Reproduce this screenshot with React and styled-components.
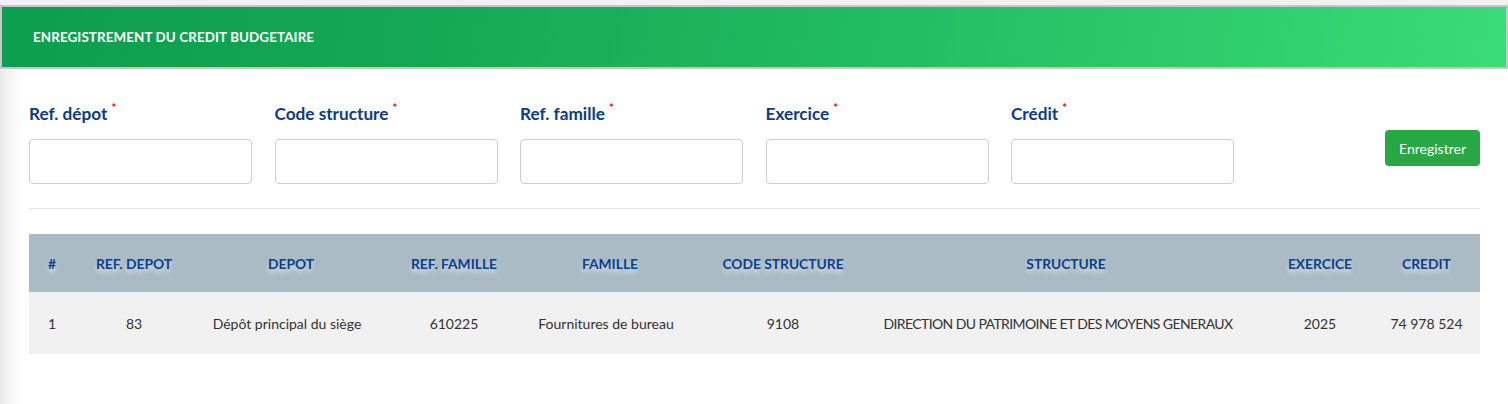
import styled, { createGlobalStyle } from "styled-components";

const GlobalStyle = createGlobalStyle`
  html, body {
    margin: 0;
    padding: 0;
    background: #ffffff;
  }
  body {
    font-family: "Lato", "Open Sans", sans-serif;
  }
`;

const fields = ["Ref. dépot", "Code structure", "Ref. famille", "Exercice", "Crédit"];

// shift = how much the cell text sits left of the header centre
const columns = [
  { title: "#", width: 46, shift: 0 },
  { title: "REF. DEPOT", width: 118, shift: 0 },
  { title: "DEPOT", width: 196, shift: 8 },
  { title: "REF. FAMILLE", width: 130, shift: 0 },
  { title: "FAMILLE", width: 182, shift: 8 },
  { title: "CODE STRUCTURE", width: 164, shift: 0 },
  { title: "STRUCTURE", width: 402, shift: 16 },
  { title: "EXERCICE", width: 106, shift: 0 },
  { title: "CREDIT", width: 107, shift: 0 },
];

const rows = [
  [
    "1",
    "83",
    "Dépôt principal du siège",
    "610225",
    "Fournitures de bureau",
    "9108",
    "DIRECTION DU PATRIMOINE ET DES MOYENS GENERAUX",
    "2025",
    "74 978 524",
  ],
];

export default function App() {
  return (
    <>
      <GlobalStyle />
      <Page>
        <TopStrip />
        <Header>
          <h1>ENREGISTREMENT DU CREDIT BUDGETAIRE</h1>
        </Header>
        <Content>
          <FormRow>
            {fields.map((f) => (
              <Field key={f}>
                <Label>
                  {f}
                  <sup>*</sup>
                </Label>
                <Input type="text" />
              </Field>
            ))}
            <SaveButton>Enregistrer</SaveButton>
          </FormRow>
          <Divider />
          <Table>
            <colgroup>
              {columns.map((c) => (
                <col key={c.title} style={{ width: c.width }} />
              ))}
            </colgroup>
            <thead>
              <tr>
                {columns.map((c) => (
                  <Th key={c.title}>{c.title}</Th>
                ))}
              </tr>
            </thead>
            <tbody>
              {rows.map((r, i) => (
                <tr key={i}>
                  {r.map((v, j) => (
                    <Td
                      key={j}
                      $shift={columns[j].shift}
                      $upper={v.length > 12 && v === v.toUpperCase()}
                    >
                      {v}
                    </Td>
                  ))}
                </tr>
              ))}
            </tbody>
          </Table>
        </Content>
      </Page>
    </>
  );
}

const Page = styled.div`
  min-height: 404px;
  background: linear-gradient(to right, #e9e9e9 0px, #f7f7f7 12px, #ffffff 24px);
`;

const TopStrip = styled.div`
  height: 5px;
  background: #f1f1f1;
`;

const Header = styled.div`
  height: 60px;
  border: 2px solid #c3c6cc;
  background: linear-gradient(100deg, #0c9e4d 0%, #14a652 25%, #22bd62 60%, #3adc76 100%);
  display: flex;
  align-items: center;
  padding-left: 31px;
  > h1 {
    margin: 0;
    font-family: "Lato", sans-serif;
    font-weight: 700;
    font-size: 13.4px;
    color: #ffffff;
    letter-spacing: 0.1px;
  }
`;

const Content = styled.div`
  padding: 35px 28px 0 29px;
`;

const FormRow = styled.div`
  display: flex;
  align-items: flex-start;
  gap: 22.5px;
`;

const Field = styled.div`
  display: flex;
  flex-direction: column;
  width: 223px;
`;

const Label = styled.label`
  font-family: "Lato", sans-serif;
  font-weight: 700;
  font-size: 17.2px;
  line-height: 20px;
  color: #0c3b85;
  margin-bottom: 15px;
  > sup {
    color: #ff0000;
    font-size: 11px;
    margin-left: 4px;
    vertical-align: 8px;
    line-height: 0;
  }
`;

const Input = styled.input`
  box-sizing: border-box;
  height: 45px;
  width: 100%;
  border: 1px solid #cfcfcf;
  border-radius: 4px;
  background: #ffffff;
`;

const SaveButton = styled.button`
  margin-left: auto;
  margin-top: 26px;
  height: 36px;
  padding: 0 14px;
  border: none;
  border-radius: 4px;
  background: #28a745;
  color: #ffffff;
  font-family: "Lato", sans-serif;
  font-size: 14px;
`;

const Divider = styled.hr`
  margin: 24px 0 25px 0;
  border: none;
  border-top: 1px solid #e3e3e3;
`;

const Table = styled.table`
  width: 1451px;
  table-layout: fixed;
  border-collapse: collapse;
`;

const Th = styled.th`
  height: 58px;
  padding: 0;
  background: #aabbc5;
  text-align: center;
  font-family: "Lato", sans-serif;
  font-weight: 700;
  font-size: 13.8px;
  color: #0c3f8c;
  text-shadow: 0 4px 4px rgba(255, 255, 255, 0.55);
`;

const Td = styled.td`
  height: 62px;
  padding: 0 ${(p) => p.$shift}px 0 0;
  background: #f1f1f1;
  text-align: center;
  font-family: "Lato", sans-serif;
  font-size: 14px;
  color: #333333;
  white-space: nowrap;
  letter-spacing: ${(p) => (p.$upper ? "-0.6px" : "0")};
`;
